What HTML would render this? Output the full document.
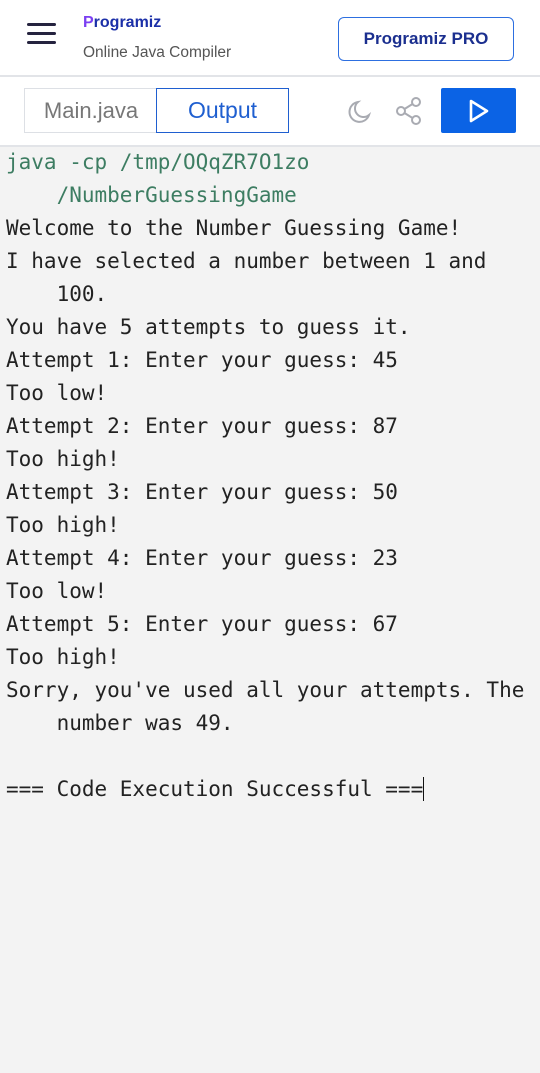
<!DOCTYPE html>
<html><head><style>
body{margin:0;width:540px;height:1073px;background:#f3f3f3;font-family:"Liberation Sans",sans-serif;overflow:hidden;position:relative}
.top{position:absolute;left:0;top:0;width:540px;height:75px;background:#fff;border-bottom:2px solid #e2e4e8}
.bar{position:absolute;left:0;top:77px;width:540px;height:68px;background:#fff;border-bottom:2px solid #e2e4e8}
.ham{position:absolute;left:27px;width:29px;height:3px;background:#25233f;border-radius:2px}
.out{position:absolute;left:6px;top:146px;font-family:"DejaVu Sans Mono","Liberation Mono",monospace;font-size:21px;line-height:33px;color:#222;white-space:pre}
.g{color:#3d7d62}
</style></head><body>
<div class="top">
<div class="ham" style="top:23px"></div><div class="ham" style="top:32px"></div><div class="ham" style="top:41px"></div>
<div style="position:absolute;left:83px;top:14px;font-weight:bold;font-size:16px;color:#1b2fa8"><span style="color:#7b3ff2">P</span>rogramiz</div>
<div style="position:absolute;left:83px;top:44px;font-size:15.5px;color:#555">Online Java Compiler</div>
<div style="position:absolute;left:338px;top:17px;width:174px;height:42px;border:1.5px solid #2d6fe0;border-radius:6px;color:#1b2f8f;font-size:17px;font-weight:bold;text-align:center;line-height:42px">Programiz PRO</div>
</div>
<div class="bar">
<div style="position:absolute;left:24px;top:11px;width:132px;height:43px;border:1px solid #dde0e5;border-right:none;color:#777;font-size:22px;text-align:center;line-height:43px">Main.java</div>
<div style="position:absolute;left:156px;top:11px;width:131px;height:43px;border:1.5px solid #1f5fd0;color:#1f5fd0;font-size:23px;text-align:center;line-height:43px">Output</div>
<svg style="position:absolute;left:344px;top:20px" width="30" height="30" viewBox="0 0 30 30"><path d="M14 5a10 10 0 1 0 11 13A8 8 0 0 1 14 5z" fill="none" stroke="#a9abb2" stroke-width="2"/></svg>
<svg style="position:absolute;left:392px;top:18px" width="32" height="32" viewBox="0 0 32 32" fill="none" stroke="#a9abb2" stroke-width="2"><circle cx="24" cy="7" r="4"/><circle cx="9" cy="16" r="4"/><circle cx="24" cy="25" r="4"/><path d="M12.5 14l8-5M12.5 18l8 5"/></svg>
<div style="position:absolute;left:441px;top:11px;width:75px;height:45px;background:#0b63e5;border-radius:2px"><svg style="position:absolute;left:27px;top:11px" width="22" height="24" viewBox="0 0 22 24"><path d="M3 2L19 12L3 22Z" fill="none" stroke="#fff" stroke-width="2.6" stroke-linejoin="round"/></svg></div>
</div>
<div class="out"><span class="g">java -cp /tmp/OQqZR7O1zo
    /NumberGuessingGame</span>
Welcome to the Number Guessing Game!
I have selected a number between 1 and
    100.
You have 5 attempts to guess it.
Attempt 1: Enter your guess: 45
Too low!
Attempt 2: Enter your guess: 87
Too high!
Attempt 3: Enter your guess: 50
Too high!
Attempt 4: Enter your guess: 23
Too low!
Attempt 5: Enter your guess: 67
Too high!
Sorry, you've used all your attempts. The
    number was 49.

=== Code Execution Successful ===<span style="border-left:1.5px solid #111"></span></div>
</body></html>
